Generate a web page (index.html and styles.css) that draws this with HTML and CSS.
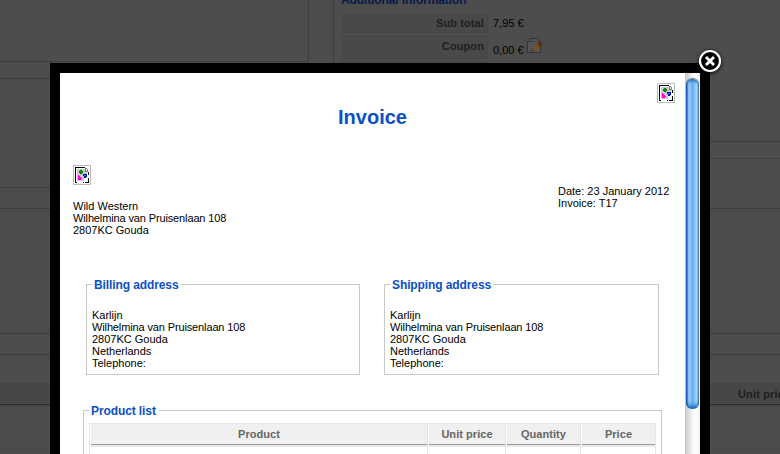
FILE: index.html
```html
<!DOCTYPE html>
<html lang="en">
<head>
<meta charset="utf-8">
<title>Invoice</title>
<link rel="stylesheet" href="styles.css">
</head>
<body>
<svg class="defs" width="0" height="0" aria-hidden="true">
  <symbol id="missing" viewBox="0 0 18 20" shape-rendering="crispEdges">
    <path fill="#fff" stroke="#bdbdbd" d="M.5 .5h17v19H.5z"/>
    <path fill="#c8c8c8" d="M4 4h8v3h2v6h-3v3H4z"/>
    <path fill="#000" d="M2 2h10v1H3v14h1v1H2zM10 17h1v1h-1zM12 17h3v-4h1v5h-4zM15 7h1v3h-1z"/>
    <path fill="#777" d="M12 3h1v3h2v1h-3zM13 3h1v1h-1zM14 4h1v2h-1z"/>
    <path fill="#007d00" d="M7 5h2v1h1v2H9v1H7V8H6V6h1z"/>
    <path fill="#00c020" d="M7 6h1v1H7z"/>
    <path fill="#f0d" d="M5 10h1v1h1v1h1v1h1v1H8v1H5z"/>
    <path fill="#0010b0" d="M10 9h4v3h-1v1h-2v-2h-1z"/>
    <path fill="#2878ff" d="M11 10h2v1h-2z"/>
  </symbol>
</svg>

<div class="page">
  <div class="top">
    <div class="left">
      <div class="notes"></div>
      <div class="panel"></div>
    </div>
    <div class="right">
      <div class="info">
        <h3>Additional information</h3>
        <div class="row"><span class="key">Sub total</span><span>7,95 €</span></div>
        <div class="row coupon"><span class="key">Coupon</span><span class="val">0,00 €</span>
          <svg class="edit" width="16" height="18" viewBox="0 0 16 18">
            <path fill="#555" stroke="#343434" d="M.5 4.500h3v-3h8v3h2v11H.5z"/>
            <path stroke="#404040" d="M4 4.500h5"/>
            <path stroke="#73541a" stroke-width="4" d="M6.500 13l5-4.500"/>
            <path stroke="#642a16" stroke-width="4" d="M11.500 8.500l3-2.500"/>
            <path fill="#49443c" d="M4 15l1-4 3 3z"/>
          </svg>
        </div>
        <div class="row"><span class="key"></span></div>
      </div>
      <div class="rule"></div>
    </div>
  </div>
  <div class="band"></div>
  <div class="box"></div>
  <div class="list">
    <div class="list-head">Unit price</div>
    <div class="list-row"></div>
  </div>
</div>

<div class="dialog">
  <div class="doc">
    <div class="tools"><svg width="18" height="20"><use href="#missing"/></svg></div>
    <h1>Invoice</h1>
    <div class="sender">
      <div>
        <svg class="logo" width="18" height="20"><use href="#missing"/></svg>
        <p>Wild Western<br><span class="street">Wilhelmina van Pruisenlaan 108</span><br>2807KC Gouda</p>
      </div>
      <p class="meta">Date: 23 January 2012<br>Invoice: T17</p>
    </div>
    <div class="addresses">
      <fieldset>
        <legend>Billing address</legend>
        <p>Karlijn<br><span class="street">Wilhelmina van Pruisenlaan 108</span><br>2807KC Gouda<br>Netherlands<br>Telephone:</p>
      </fieldset>
      <fieldset>
        <legend>Shipping address</legend>
        <p>Karlijn<br><span class="street">Wilhelmina van Pruisenlaan 108</span><br>2807KC Gouda<br>Netherlands<br>Telephone:</p>
      </fieldset>
    </div>
    <fieldset class="products">
      <legend>Product list</legend>
      <div class="grid">
        <div class="th">Product</div><div class="th">Unit price</div><div class="th">Quantity</div><div class="th">Price</div>
        <div class="td"></div><div class="td"></div><div class="td"></div><div class="td"></div>
      </div>
    </fieldset>
  </div>
  <div class="scrollbar"><div class="thumb"></div></div>
  <svg class="close" width="30" height="30" viewBox="0 0 30 30">
    <circle class="halo" cx="15" cy="15" r="11"/>
    <circle cx="15" cy="15" r="10" fill="#000" stroke="#fff" stroke-width="2.200"/>
    <path stroke="#fff" stroke-width="2.900" d="M11 11l8 8M19 11l-8 8"/>
  </svg>
</div>
</body>
</html>
```

FILE: styles.css
```css
* { box-sizing: border-box; }
body {
  margin: 0;
  width: 780px;
  height: 454px;
  overflow: hidden;
  position: relative;
  background: #4d4d4d;
  font: 11px/12px "Liberation Sans", Arial, sans-serif;
  color: #000;
}
h1, h3, p { margin: 0; }
.defs { position: absolute; }

.page { width: 780px; height: 454px; overflow: hidden; }
.top { display: flex; height: 159px; gap: 24px; }
.left { width: 309px; }
.notes { height: 62px; border: solid #3d3d3d; border-width: 0 1px 1px 0; }
.panel { margin-top: 16px; height: 110px; width: 200px; border: solid #3d3d3d; border-width: 1px 0; }
.right { flex: 1; }
.info { display: flow-root; height: 142px; border: solid #3d3d3d; border-width: 0 0 1px 1px; padding-left: 7px; }
.rule { height: 17px; border-bottom: 1px solid #404040; }
.info h3 { height: 14px; margin-top: -7px; font-size: 12px; line-height: 14px; letter-spacing: -.12px; color: #06194a; }
.row { display: flex; height: 19px; margin-top: 7px; line-height: 18px; }
.row + .row { margin-top: 2px; }
.key {
  width: 147px;
  padding-right: 3px;
  margin-right: 5px;
  border: solid #464646;
  border-width: 0 1px 1px 0;
  background: #494949;
  color: #1f1f1f;
  font-weight: bold;
  letter-spacing: .1px;
  text-align: right;
}
.coupon { height: 24px; line-height: 23px; }
.coupon .val { padding-top: 4px; }
.edit { margin: 2px 0 0 3px; }
.band { height: 50px; border-bottom: 1px solid #3d3d3d; }
.box { height: 125px; border-bottom: 1px solid #3d3d3d; }
.list { margin-top: 20px; border-top: 1px solid #3d3d3d; padding-top: 28px; }
.list-head {
  height: 22px;
  background: #474747;
  border-bottom: 1px solid #2e2e2e;
  padding-left: 738px;
  line-height: 23px;
  font-weight: bold;
  color: #1e1e1e;
  letter-spacing: .15px;
  white-space: nowrap;
}
.list-row { height: 45px; border: solid #464646; border-width: 2px 0 1px; }

.dialog {
  position: absolute;
  left: 50px;
  top: 63px;
  width: 660px;
  height: 391px;
  border: 10px solid #000;
  border-bottom: 0;
  background: #fff;
  display: flex;
}
.doc { width: 625px; padding: 10px 10px 0 13px; overflow: hidden; }
.tools { height: 20px; display: flex; justify-content: flex-end; }
.doc h1 { height: 28px; margin-right: 3px; font-size: 20px; line-height: 28px; color: #0b50c5; text-align: center; }
.sender { height: 76px; margin-top: 34px; display: flex; justify-content: space-between; }
.logo { display: block; margin-bottom: 15px; }
.street { letter-spacing: -.13px; }
.meta { width: 117px; padding-top: 20px; }
.addresses { display: flex; gap: 24px; margin: 36px 3px 0 13px; }
fieldset { margin: 0; min-width: 0; border: 1px solid #c9c9c9; padding: 17px 5px 5px; width: 274px; }
fieldset + fieldset { width: 275px; }
legend { height: 15px; padding: 0 2px; font-size: 12px; line-height: 17px; font-weight: bold; color: #0b50c5; letter-spacing: -.1px; white-space: nowrap; }
.products { width: 579px; margin: 28px 0 0 10px; padding: 5px 5px 0; }
.grid { display: grid; grid-template-columns: 338px 78px 75px 75px; border-top: 1px solid #e5e5e5; border-left: 1px solid #e5e5e5; width: 567px; }
.th {
  height: 23px;
  border: solid;
  border-width: 0 1px 0 1px;
  border-color: #fff #e5e5e5 #fff #fff;
  background: linear-gradient(#f0f0f0 20px, #999 20px, #999 21px, #e8e8e8 21px);
  font-weight: bold;
  line-height: 21px;
  text-align: center;
  color: #666;
  letter-spacing: .05px;
}
.td { height: 40px; border-right: 1px solid #e5e5e5; }

.scrollbar { width: 15px; padding: 6px 1px 0; background: linear-gradient(90deg, #c5c5c5, #eee 40%, #fff 65%, #f1f1f1); }
.thumb {
  height: 330px;
  border-radius: 6px;
  background: linear-gradient(90deg, #1559bd 0, #1559bd 1px, #82b8f0 2px, #a9cdf1 4px, #7cb5ed 5px, #62aff4 7px, #86c8ff 9px, #a5e2ff 11px, #5ba4e0 12px, #666 13px);
  box-shadow: inset 0 5px 3px -3px #2870bd, inset 0 -5px 4px -2px #1465bd, 0 -1px 1px #777;
}
.close { position: absolute; left: 635px; top: -27px; overflow: visible; }
.halo { fill: #222; filter: drop-shadow(0 1px 2px #000); }
```
